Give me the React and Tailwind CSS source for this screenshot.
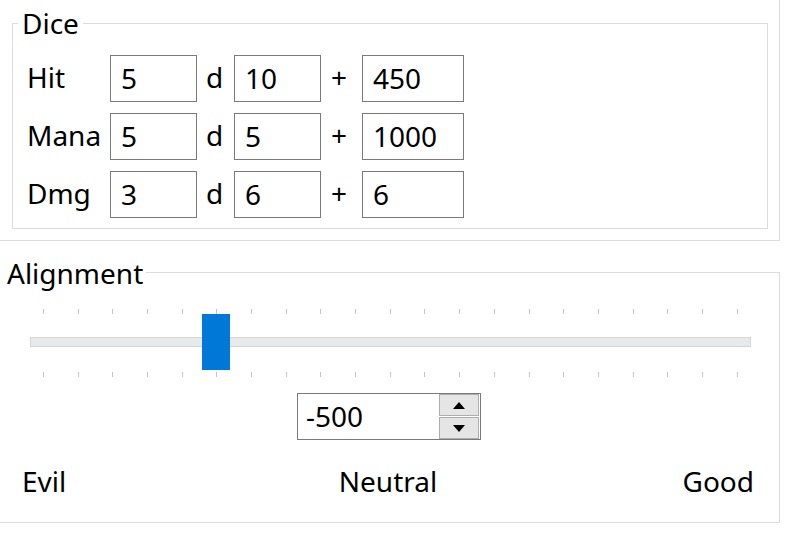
import { useState } from 'react'

const rows = [
  { label: 'Hit', count: '5', sides: '10', bonus: '450' },
  { label: 'Mana', count: '5', sides: '5', bonus: '1000' },
  { label: 'Dmg', count: '3', sides: '6', bonus: '6' },
]

// 21 ticks, -1000 .. 1000 step 100
const ticks = Array.from({ length: 21 }, (_, i) => 13 + i * 34.68)

function Ticks() {
  return (
    <svg width="721" height="5" className="block">
      {ticks.map((x, i) => (
        <line key={i} x1={Math.round(x) + 0.5} y1="0" x2={Math.round(x) + 0.5} y2="5" stroke="#c4c4c4" strokeWidth="1" />
      ))}
    </svg>
  )
}

function Field({ value, width }) {
  return (
    <input
      readOnly
      value={value}
      className={`${width} h-[47px] border border-[#7a7a7a] bg-white pl-[10px] pb-[2px] text-black outline-none`}
    />
  )
}

export default function App() {
  const [value, setValue] = useState(-500)

  return (
    <div className="w-[785px] h-[542px] bg-white overflow-hidden text-[28px] text-black font-['Noto_Sans',sans-serif] leading-[34px]">
      {/* Marco superior */}
      <div className="ml-[-1px] mt-[-20px] w-[781px] h-[261px] border border-[#dcdcdc] pl-[12px] pt-[42px]">
        <div className="relative w-[756px] h-[206px] border border-[#dcdcdc] pl-[14px] pt-[31px]">
          <span className="absolute left-[5px] top-[-18px] bg-white px-[4px]">Dice</span>
          <div className="flex flex-col gap-[11px]">
            {rows.map((r) => (
              <div key={r.label} className="flex items-center">
                <span className="w-[83px] pb-[3px]">{r.label}</span>
                <Field value={r.count} width="w-[87px]" />
                <span className="w-[37px] pl-[9px] pb-[3px]">d</span>
                <Field value={r.sides} width="w-[87px]" />
                <span className="w-[41px] pl-[10px] pb-[3px]">+</span>
                <Field value={r.bonus} width="w-[102px]" />
              </div>
            ))}
          </div>
        </div>
      </div>

      {/* Alignment */}
      <div className="relative mt-[31px] ml-[-1px] w-[781px] h-[251px] border border-[#dcdcdc]">
        <span className="absolute left-0 top-[-17px] bg-white pl-[7px] pr-[3px]">Alignment</span>

        <div className="relative ml-[30px] mt-[36px] w-[721px]">
          <Ticks />
          <div className="mt-[23px] h-[10px] border border-[#d6d6d6] bg-[#e7eaea]" />
          <div className="mt-[25px]">
            <Ticks />
          </div>
          <div
            className="absolute top-[5px] w-[28px] h-[56px] bg-[#0078d7]"
            style={{ left: `${Math.round(ticks[(value + 1000) / 100]) - 14}px` }}
          />
        </div>

        <div className="ml-[297px] mt-[16px] w-[184px] h-[47px] border border-[#7a7a7a] flex">
          <span className="flex-1 pl-[8px] pb-[2px] flex items-center">{value}</span>
          <div className="w-[41px] pr-[1px] flex flex-col gap-[1px]">
            <button
              onClick={() => setValue((v) => Math.min(1000, v + 100))}
              className="h-[22px] border border-[#adadad] bg-[#e5e5e5] flex items-center justify-center"
            >
              <svg width="12" height="7" viewBox="0 0 12 7">
                <path d="M6 0 L12 7 L0 7 Z" fill="#000" />
              </svg>
            </button>
            <button
              onClick={() => setValue((v) => Math.max(-1000, v - 100))}
              className="h-[22px] border border-[#adadad] bg-[#e5e5e5] flex items-center justify-center"
            >
              <svg width="12" height="7" viewBox="0 0 12 7">
                <path d="M0 0 L12 0 L6 7 Z" fill="#000" />
              </svg>
            </button>
          </div>
        </div>

        <div className="mt-[24px] grid grid-cols-3 pl-[22px] pr-[25px]">
          <span className="text-left">Evil</span>
          <span className="text-center">Neutral</span>
          <span className="text-right">Good</span>
        </div>
      </div>
    </div>
  )
}
